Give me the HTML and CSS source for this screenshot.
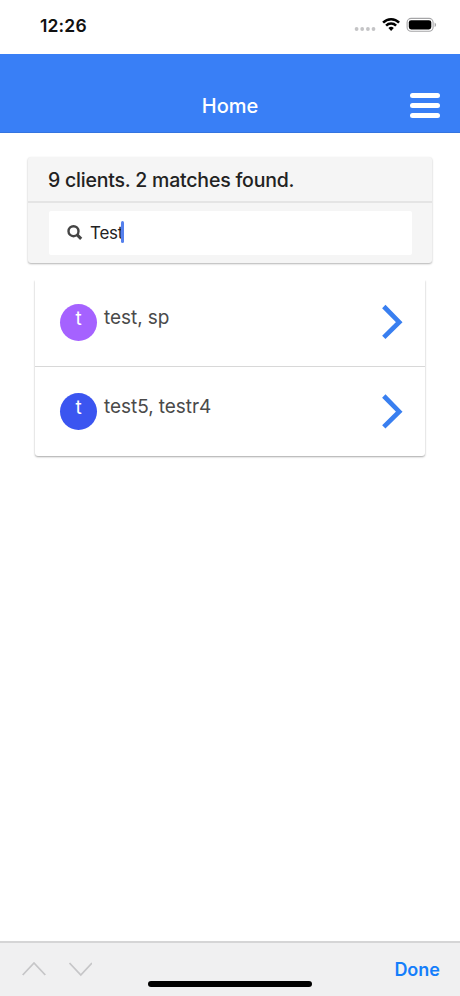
FILE: index.html
```html
<!DOCTYPE html>
<html lang="en">
<head>
<meta charset="utf-8">
<meta name="viewport" content="width=device-width, initial-scale=1">
<title>Home</title>
<link rel="stylesheet" href="styles.css">
</head>
<body>
<div class="screen">
  <div class="status">
    <span class="time">12:26</span>
    <svg class="indicators" width="84" height="18" viewBox="0 0 84 18" aria-hidden="true">
      <g fill="#c4c4c6"><circle cx="3.6" cy="13" r="1.9"/><circle cx="9.2" cy="13" r="1.9"/><circle cx="14.9" cy="13" r="1.9"/><circle cx="20.5" cy="13" r="1.9"/></g>
      <g fill="none" stroke="#000" stroke-width="2.5">
        <path d="M30.1 6.6a11.1 11.1 0 0 1 16 0"/>
        <path d="M33.1 9.7a7 7 0 0 1 10 0"/>
      </g>
      <path d="M35.4 12.1a3.9 3.9 0 0 1 5.4 0L38.1 14.9z"/>
      <rect x="54.1" y="2.4" width="26" height="12.8" rx="4" fill="none" stroke="#a5a5a7" stroke-width="1.1"/>
      <rect x="55.8" y="4.2" width="22.5" height="9.3" rx="2.4"/>
      <path d="M81.6 6.5v4.6a2.5 2.5 0 0 0 0-4.6z" fill="#a5a5a7"/>
    </svg>
  </div>
  <header class="navbar">
    <h1 class="title">Home</h1>
    <div class="menu"><i></i><i></i><i></i></div>
  </header>
  <main class="content">
    <section class="search-card">
      <h2 class="summary">9 clients. 2 matches found.</h2>
      <div class="search-area">
        <div class="search">
          <svg width="16" height="16" viewBox="0 0 16 16" fill="none" stroke="#454545" aria-hidden="true">
            <circle cx="6.5" cy="6.2" r="5" stroke-width="2.4"/>
            <path d="M10.2 9.9L14.2 13.9" stroke-width="3"/>
          </svg>
          <span class="query">Test</span><span class="caret"></span>
        </div>
      </div>
    </section>
    <ul class="clients">
      <li class="client">
        <span class="avatar purple">t</span>
        <span class="name">test, sp</span>
        <svg class="chevron" width="22" height="36" viewBox="0 0 22 36" aria-hidden="true"><path d="M2.8 2.5L18.2 18.2L2.8 33.4"/></svg>
      </li>
      <li class="client">
        <span class="avatar blue">t</span>
        <span class="name">test5, testr4</span>
        <svg class="chevron" width="22" height="36" viewBox="0 0 22 36" aria-hidden="true"><path d="M2.8 3L18.2 18.7L2.8 33.9"/></svg>
      </li>
    </ul>
  </main>
  <footer class="toolbar">
    <svg width="70" height="16" viewBox="0 0 70 16" fill="none" stroke="#c6c6c8" stroke-width="1.8" aria-hidden="true">
      <path d="M.7 14L12 2L23.3 14M47.5 2L58.8 14L70 2"/>
    </svg>
    <span class="done">Done</span>
    <span class="home-bar"></span>
  </footer>
</div>
</body>
</html>
```

FILE: styles.css
```css
* { box-sizing: border-box; }

body {
  margin: 0;
  background: #fff;
  font-family: Inter, "Liberation Sans", sans-serif;
}

.screen {
  display: flex;
  flex-direction: column;
  height: 996px;
  overflow: hidden;
}

.status {
  flex: none;
  display: flex;
  justify-content: space-between;
  height: 54px;
  padding: 15px 23px 0 40px;
}

.time {
  font-size: 17.5px;
  line-height: 22px;
  font-weight: 600;
  letter-spacing: 0.15px;
  color: #111;
}

.indicators { margin-top: 1px; }

.navbar {
  flex: none;
  display: grid;
  grid-template-columns: 1fr auto 1fr;
  align-items: start;
  height: 79px;
  padding: 38px 20px 0;
  background: #397ff6;
  border-bottom: 1px solid #3474e0;
  color: #fff;
}

.title {
  grid-column: 2;
  margin: 0;
  font-size: 20px;
  line-height: 28px;
  font-weight: 450;
}

.menu {
  justify-self: end;
  display: grid;
  gap: 5px;
  width: 30px;
  padding-top: 1px;
}

.menu i {
  height: 5px;
  border-radius: 2.5px;
  background: #fff;
}

.content {
  flex: 1;
  padding: 24px 28px 0;
}

.search-card {
  height: 106px;
  border-radius: 3px;
  background: #f5f5f5;
  box-shadow: 0 1px 2px rgba(0, 0, 0, .3);
}

.summary {
  height: 46px;
  margin: 0;
  padding-left: 20px;
  border-bottom: 2px solid #e4e4e4;
  font-size: 19.5px;
  line-height: 47px;
  font-weight: 450;
  letter-spacing: -0.21px;
  color: #222;
}

.search-area { padding: 8px 20px 0 21px; }

.search {
  display: flex;
  align-items: center;
  height: 44px;
  padding-left: 18px;
  border-radius: 2px;
  background: #fff;
}

.query {
  margin-left: 7px;
  margin-top: -1px;
  font-size: 17px;
  letter-spacing: -0.25px;
  color: #222;
}

.caret {
  width: 3px;
  height: 22px;
  margin: -2px 0 0 -2px;
  border-radius: 2px;
  background: #5580ed;
}

.clients {
  margin: 17px 7px 0;
  padding: 0;
  list-style: none;
  border-radius: 0 0 3px 3px;
  box-shadow: 0 1px 2px rgba(0, 0, 0, .35);
  clip-path: inset(0 -4px -5px);
}

.client {
  display: flex;
  align-items: flex-start;
  height: 87px;
  padding: 24px 22px 0 25px;
  border-bottom: 1px solid #d8d8d8;
}

.client + .client {
  height: 89px;
  padding-top: 26px;
  border-bottom: 0;
}

.avatar {
  width: 37px;
  height: 37px;
  border-radius: 50%;
  text-align: center;
  font-size: 19px;
  line-height: 30px;
  color: #fff;
}

.purple { background: #a562ff; }
.blue { background: #3b55f0; }

.name {
  margin-left: 7px;
  font-size: 19px;
  line-height: 27px;
  letter-spacing: -0.05px;
  color: #4a4a4a;
}

.chevron {
  margin-left: auto;
  fill: none;
  stroke: #397ff0;
  stroke-width: 4.7;
}

.toolbar {
  position: relative;
  flex: none;
  display: flex;
  justify-content: space-between;
  align-items: flex-start;
  height: 55px;
  padding: 18px 20px 0 22px;
  border-top: 2px solid #d5d5d6;
  background: #f0f0f1;
}

.done {
  margin-top: -2px;
  font-size: 18px;
  line-height: 22px;
  font-weight: 600;
  color: #147efb;
}

.home-bar {
  position: absolute;
  left: 148px;
  bottom: 9px;
  width: 164px;
  height: 6px;
  border-radius: 3px;
  background: #000;
}
```
